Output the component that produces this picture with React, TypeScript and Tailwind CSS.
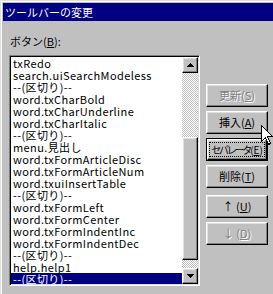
import React from "react";

const items = [
  "txRedo",
  "search.uiSearchModeless",
  "--(区切り)--",
  "word.txCharBold",
  "word.txCharUnderline",
  "word.txCharItalic",
  "--(区切り)--",
  "menu.見出し",
  "word.txFormArticleDisc",
  "word.txFormArticleNum",
  "word.txuiInsertTable",
  "--(区切り)--",
  "word.txFormLeft",
  "word.txFormCenter",
  "word.txFormIndentInc",
  "word.txFormIndentDec",
  "--(区切り)--",
  "help.help1",
  "--(区切り)--",
];

const raised =
  "border border-t-white border-l-white border-r-black border-b-black shadow-[inset_-1px_-1px_#808080,inset_1px_1px_#dfdfdf] bg-[#c0c0c0]";

function Arrow({ up }: { up?: boolean }) {
  return (
    <svg width="7" height="4" viewBox="0 0 7 4">
      <path d={up ? "M3.5 0 L7 4 L0 4 Z" : "M0 0 L7 0 L3.5 4 Z"} fill="#000" shapeRendering="crispEdges" />
    </svg>
  );
}

function Btn({
  label,
  mnemonic,
  disabled,
  primary,
}: {
  label: string;
  mnemonic: string;
  disabled?: boolean;
  primary?: boolean;
}) {
  const text = (
    <span
      className={`whitespace-nowrap ${
        disabled ? "text-[#808080] [text-shadow:1px_1px_0_#ffffff]" : "text-black"
      } ${primary ? "text-[10px]" : ""}`}
    >
      {primary ? <span className="tracking-[-2.2px]">{label}</span> : label}(
      <span className="underline underline-offset-[1px]">{mnemonic}</span>)
    </span>
  );
  if (primary) {
    return (
      <div className="h-[23px] w-[62px] border border-black">
        <div className={`flex h-full w-full items-center justify-center ${raised}`}>
          <span className="flex h-[15px] w-[56px] items-center justify-center border border-dotted border-black leading-[13px]">
            {text}
          </span>
        </div>
      </div>
    );
  }
  return (
    <div className={`flex h-[23px] w-[62px] items-center justify-center ${raised}`}>{text}</div>
  );
}

export default function App() {
  return (
    <div
      className="relative h-[294px] w-[273px] overflow-hidden border-l border-t border-[#dfdfdf] bg-[#c0c0c0] text-[11px]"
      style={{ fontFamily: "'Noto Sans CJK JP', sans-serif" }}
    >
      <div className="h-full border-l border-t border-white pl-px pt-px">
        <div className="flex h-[18px] items-center bg-[#000080] pl-[2px] text-[11px] leading-none text-white">
          ツールバーの変更
        </div>

        <div className="pl-[6px]">
          <div className="ml-px mt-[13px] h-[14px] leading-[14px]">
            ボタン(<span className="underline underline-offset-[1px]">B</span>):
          </div>

          <div className="mt-[7px] flex items-start">
            <div className="h-[231px] w-[191px] border border-b-white border-l-[#808080] border-r-white border-t-[#808080] shadow-[inset_1px_1px_#000,inset_-1px_-1px_#dfdfdf] p-px">
              <div className="flex h-full bg-white">
                <div className="flex-1 overflow-hidden">
                  {items.map((it, i) => (
                    <div
                      key={i}
                      className={`h-[12px] whitespace-nowrap pl-[2px] text-[11px] leading-[12px] tracking-[0.4px] ${
                        i === items.length - 1 ? "bg-[#000080] text-white" : "text-black"
                      }`}
                    >
                      {it}
                    </div>
                  ))}
                </div>
                <div className="flex w-[16px] flex-col">
                  <div className={`flex h-[16px] items-center justify-center ${raised}`}>
                    <Arrow up />
                  </div>
                  <div className="flex-1 bg-[repeating-conic-gradient(#c0c0c0_0_25%,#ffffff_0_50%)] bg-[length:2px_2px] pt-[64px]">
                    <div className={`h-[123px] ${raised}`} />
                  </div>
                  <div className={`flex h-[16px] items-center justify-center ${raised}`}>
                    <Arrow />
                  </div>
                </div>
              </div>
            </div>

            <div className="ml-[6px] mt-[29px] flex flex-col text-[11px]">
              <Btn label="更新" mnemonic="S" disabled />
              <div className="mt-[4px]">
                <Btn label="挿入" mnemonic="A" />
              </div>
              <div className="mt-[4px]">
                <Btn label="セパレータ" mnemonic="E" primary />
              </div>
              <div className="mt-[4px]">
                <Btn label="削除" mnemonic="T" />
              </div>
              <div className="mt-[7px]">
                <Btn label="↑ " mnemonic="U" />
              </div>
              <div className="mt-[4px]">
                <Btn label="↓ " mnemonic="D" disabled />
              </div>
            </div>
          </div>
        </div>
      </div>

      <svg
        className="absolute left-[260px] top-[124px]"
        width="13"
        height="21"
        viewBox="0 0 13 21"
        shapeRendering="crispEdges"
      >
        <path
          d="M0.5 0.5 L0.5 16.5 L4.5 12.5 L7.5 19.5 L9.5 18.5 L6.5 11.5 L11.5 11.5 Z"
          fill="#fff"
          stroke="#000"
          strokeWidth="1"
        />
      </svg>
    </div>
  );
}
